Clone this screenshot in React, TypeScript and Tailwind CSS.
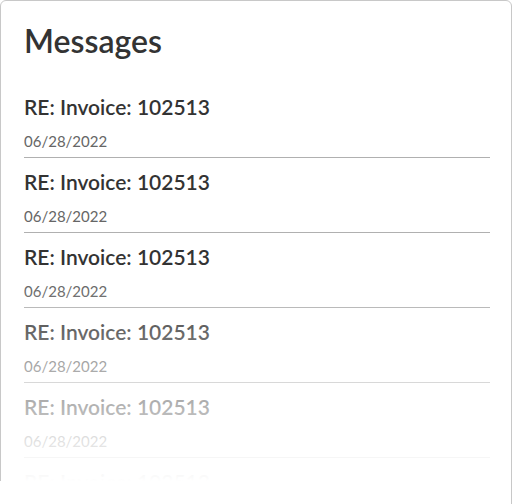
import React from 'react'

const messages = Array.from({ length: 6 }, () => ({
  subject: 'RE: Invoice: 102513',
  date: '06/28/2022',
}))

export default function App() {
  return (
    <div className="w-[512px] h-[504px] bg-white overflow-hidden" style={{ fontFamily: 'Lato, "Open Sans", sans-serif' }}>
      <div className="relative h-[560px] rounded-md border border-[#c8c8c8] pl-[23px] pr-[21px] pt-[20px]">
        <h1 className="text-[32px] leading-[40px] font-semibold text-[#333]">Messages</h1>
        <ul className="mt-[33px]">
          {messages.map((m, i) => (
            <li key={i} className="border-b border-[#b0b0b0] pb-[5px] mb-[11px]">
              <div className="text-[21px] leading-[26px] font-semibold text-[#333]">{m.subject}</div>
              <div className="mt-[11px] text-[15px] leading-[21px] text-[#666]">{m.date}</div>
            </li>
          ))}
        </ul>
        <div className="absolute left-0 right-0 top-[280px] h-[200px] bg-gradient-to-b from-white/0 to-white" />
        <div className="absolute left-[-1px] right-0 top-[480px] bottom-0 bg-white" />
      </div>
    </div>
  )
}
